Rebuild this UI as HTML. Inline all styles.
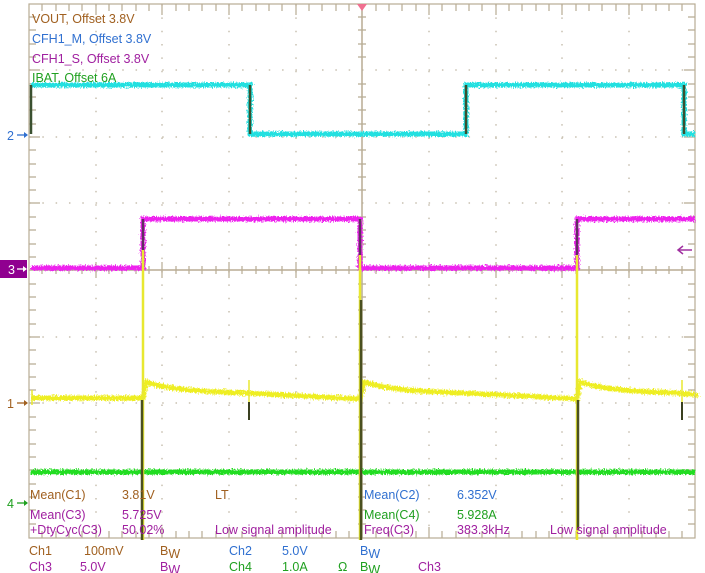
<!DOCTYPE html>
<html><head><meta charset="utf-8"><style>
body{margin:0;background:#fff;width:705px;height:573px;overflow:hidden;font-family:"Liberation Sans",sans-serif}
svg{position:absolute;left:0;top:0}
text{font-family:"Liberation Sans",sans-serif;font-size:12.5px}
</style></head><body>
<svg width="705" height="573" viewBox="0 0 705 573">
<defs>
<filter id="n" x="-5%" y="-5%" width="110%" height="110%">
<feTurbulence type="fractalNoise" baseFrequency="0.9 0.5" numOctaves="2" seed="3"/>
<feDisplacementMap in="SourceGraphic" scale="6" xChannelSelector="R" yChannelSelector="G"/>
</filter>
</defs>
<g stroke="#b8ac94" fill="none">
<rect x="29" y="4" width="666" height="534" stroke-width="1.2"/>
<g stroke-dasharray="1.5 11.85" stroke-width="1.5" stroke="#c8c0b0">
<path d="M96 4V538M162 4V538M229 4V538M296 4V538M429 4V538M496 4V538M562 4V538M629 4V538"/>
<path d="M29 70H695M29 137H695M29 203H695M29 337H695M29 403H695M29 470H695" stroke-dasharray="1.5 11.82"/>
</g>
<path d="M362 4V538M29 270H695" stroke-width="1.5"/>
<g stroke-width="1.2">
<path d="M42 266v8M56 266v8M69 266v8M82 266v8M109 266v8M122 266v8M136 266v8M149 266v8M176 266v8M189 266v8M202 266v8M216 266v8M242 266v8M256 266v8M269 266v8M282 266v8M309 266v8M322 266v8M336 266v8M349 266v8M376 266v8M389 266v8M402 266v8M416 266v8M442 266v8M456 266v8M469 266v8M482 266v8M509 266v8M522 266v8M536 266v8M549 266v8M576 266v8M589 266v8M602 266v8M616 266v8M642 266v8M656 266v8M669 266v8M682 266v8"/>
<path d="M96 262v16M162 262v16M229 262v16M296 262v16M429 262v16M496 262v16M562 262v16M629 262v16"/>
<path d="M358 17h8M358 30h8M358 44h8M358 57h8M358 84h8M358 97h8M358 110h8M358 124h8M358 150h8M358 164h8M358 177h8M358 190h8M358 217h8M358 230h8M358 244h8M358 257h8M358 284h8M358 297h8M358 310h8M358 324h8M358 350h8M358 364h8M358 377h8M358 390h8M358 417h8M358 430h8M358 444h8M358 457h8M358 484h8M358 497h8M358 510h8M358 524h8"/>
<path d="M42 4v7M56 4v7M69 4v7M82 4v7M96 4v11M109 4v7M122 4v7M136 4v7M149 4v7M162 4v11M176 4v7M189 4v7M202 4v7M216 4v7M229 4v11M242 4v7M256 4v7M269 4v7M282 4v7M296 4v11M309 4v7M322 4v7M336 4v7M349 4v7M376 4v7M389 4v7M402 4v7M416 4v7M429 4v11M442 4v7M456 4v7M469 4v7M482 4v7M496 4v11M509 4v7M522 4v7M536 4v7M549 4v7M562 4v11M576 4v7M589 4v7M602 4v7M616 4v7M629 4v11M642 4v7M656 4v7M669 4v7M682 4v7"/>
<path d="M42 538v-7M56 538v-7M69 538v-7M82 538v-7M96 538v-11M109 538v-7M122 538v-7M136 538v-7M149 538v-7M162 538v-11M176 538v-7M189 538v-7M202 538v-7M216 538v-7M229 538v-11M242 538v-7M256 538v-7M269 538v-7M282 538v-7M296 538v-11M309 538v-7M322 538v-7M336 538v-7M349 538v-7M376 538v-7M389 538v-7M402 538v-7M416 538v-7M429 538v-11M442 538v-7M456 538v-7M469 538v-7M482 538v-7M496 538v-11M509 538v-7M522 538v-7M536 538v-7M549 538v-7M562 538v-11M576 538v-7M589 538v-7M602 538v-7M616 538v-7M629 538v-11M642 538v-7M656 538v-7M669 538v-7M682 538v-7"/>
<path d="M29 17h7M29 30h7M29 44h7M29 57h7M29 70h11M29 84h7M29 97h7M29 110h7M29 124h7M29 137h11M29 150h7M29 164h7M29 177h7M29 190h7M29 203h11M29 217h7M29 230h7M29 244h7M29 257h7M29 284h7M29 297h7M29 310h7M29 324h7M29 337h11M29 350h7M29 364h7M29 377h7M29 390h7M29 403h11M29 417h7M29 430h7M29 444h7M29 457h7M29 470h11M29 484h7M29 497h7M29 510h7M29 524h7"/>
<path d="M695 17h-7M695 30h-7M695 44h-7M695 57h-7M695 70h-11M695 84h-7M695 97h-7M695 110h-7M695 124h-7M695 137h-11M695 150h-7M695 164h-7M695 177h-7M695 190h-7M695 203h-11M695 217h-7M695 230h-7M695 244h-7M695 257h-7M695 284h-7M695 297h-7M695 310h-7M695 324h-7M695 337h-11M695 350h-7M695 364h-7M695 377h-7M695 390h-7M695 403h-11M695 417h-7M695 430h-7M695 444h-7M695 457h-7M695 470h-11M695 484h-7M695 497h-7M695 510h-7M695 524h-7"/>
</g>
</g>
<polygon points="357,4 367,4 362,11" fill="#f07090"/>
<g fill="none" stroke-width="5" filter="url(#n)">
<path stroke="#22e0e0" d="M31 85H250V134H466V85H684V134H695"/>
<path stroke="#ee22ee" d="M31 268H143V219H360V268H577V219H695"/>
<path stroke="#22dd22" d="M31 472H695"/>
<path stroke="#eeee22" d="M31 398H143L146 382Q170 390 220 392T360 399L364 382Q388 390 438 392T577 399L580 382Q604 390 654 392T695 396"/>
</g>
<g stroke-width="2.5" fill="none">
<path stroke="#3a5030" d="M31 134V85M250 85V134M466 134V85M684 85V134"/>
<path stroke="#603060" d="M143 268V219M360 219V268M577 268V219"/>
<path stroke="#e8e830" d="M143 250V540M360 255V540M577 255V540"/>
<path stroke="#4a5020" d="M142 400V540M361 300V540M578 400V530"/>
<path stroke="#e8e830" d="M249 380V415M682 380V415M32 390V405" stroke-width="1.5"/>
<path stroke="#3a4020" d="M249 402V420M682 402V420" stroke-width="2"/>
</g>
<text x="7" y="140" fill="#3070d0" font-size="13">2</text><path d="M17 135h10" stroke="#3070d0" stroke-width="1.3"/><path d="M24 132l4 3-4 3z" fill="#3070d0"/>
<rect x="0" y="260" width="27" height="18" fill="#900090"/><text x="8" y="274" fill="#fff" font-size="13">3</text><path d="M17 269h9" stroke="#fff" stroke-width="1.3"/><path d="M23 266l4 3-4 3z" fill="#fff"/>
<text x="7" y="408" fill="#a06020" font-size="13">1</text><path d="M17 403h10" stroke="#a06020" stroke-width="1.3"/><path d="M24 400l4 3-4 3z" fill="#a06020"/>
<text x="7" y="508" fill="#20a020" font-size="13">4</text><path d="M17 503h10" stroke="#20a020" stroke-width="1.3"/><path d="M24 500l4 3-4 3z" fill="#20a020"/>
<path d="M679 250h13" stroke="#a030a0" stroke-width="1.5"/><path d="M683 246l-5 4 5 4" stroke="#a030a0" stroke-width="1.5" fill="none"/>
<text x="32" y="23" fill="#a06020">VOUT, Offset 3.8V</text>
<text x="32" y="43" fill="#3070d0">CFH1_M, Offset 3.8V</text>
<text x="32" y="63" fill="#a020a0">CFH1_S, Offset 3.8V</text>
<text x="32" y="82" fill="#20a020">IBAT, Offset 6A</text>
<text x="30" y="499" fill="#a06020">Mean(C1)</text><text x="122" y="499" fill="#a06020">3.81V</text><text x="215" y="499" fill="#a06020">LT</text>
<text x="30" y="519" fill="#a020a0">Mean(C3)</text><text x="122" y="519" fill="#a020a0">5.725V</text>
<text x="30" y="534" fill="#a020a0">+DtyCyc(C3)</text><text x="122" y="534" fill="#a020a0">50.02%</text><text x="215" y="534" fill="#a020a0">Low signal amplitude</text>
<text x="364" y="499" fill="#3070d0">Mean(C2)</text><text x="457" y="499" fill="#3070d0">6.352V</text>
<text x="364" y="519" fill="#20a020">Mean(C4)</text><text x="457" y="519" fill="#20a020">5.928A</text>
<text x="364" y="534" fill="#a020a0">Freq(C3)</text><text x="457" y="534" fill="#a020a0">383.3kHz</text><text x="550" y="534" fill="#a020a0">Low signal amplitude</text>
<text x="29" y="555" fill="#a06020">Ch1</text><text x="84" y="555" fill="#a06020">100mV</text><text x="160" y="555" fill="#a06020" font-size="10">B<tspan dy="3">W</tspan></text>
<text x="229" y="555" fill="#3070d0">Ch2</text><text x="282" y="555" fill="#3070d0">5.0V</text><text x="360" y="555" fill="#3070d0" font-size="10">B<tspan dy="3">W</tspan></text>
<text x="29" y="571" fill="#a020a0">Ch3</text><text x="80" y="571" fill="#a020a0">5.0V</text><text x="160" y="571" fill="#a020a0" font-size="10">B<tspan dy="3">W</tspan></text>
<text x="229" y="571" fill="#20a020">Ch4</text><text x="282" y="571" fill="#20a020">1.0A</text><text x="338" y="571" fill="#20a020">Ω</text><text x="360" y="571" fill="#20a020" font-size="10">B<tspan dy="3">W</tspan></text>
<text x="418" y="571" fill="#a020a0">Ch3</text>
</svg>
</body></html>
